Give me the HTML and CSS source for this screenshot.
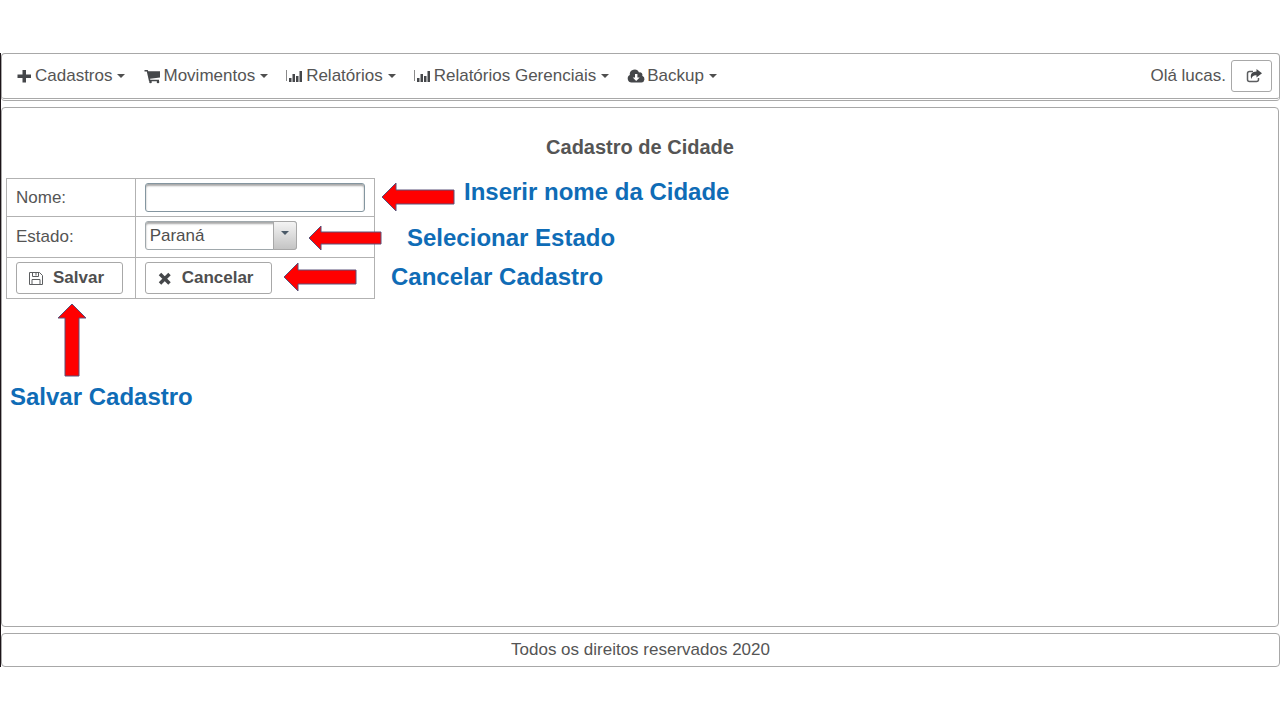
FILE: index.html
```html
<!DOCTYPE html>
<html lang="pt-BR">
<head>
<meta charset="utf-8">
<meta name="viewport" content="width=device-width, initial-scale=1">
<title>Cadastro de Cidade</title>
<link rel="stylesheet" href="styles.css">
</head>
<body>
<div class="app">
  <header class="topbar">
    <nav class="menu">
      <button class="menu-item" type="button">
        <svg class="icon" viewBox="0 0 18 18"><path d="M7.500 3h3.500v4.500h5V11h-5v4.500H7.500V11h-5V7.500h5z"/></svg>
        <span>Cadastros</span><span class="caret"></span>
      </button>
      <button class="menu-item" type="button">
        <svg class="icon" viewBox="0 0 18 18"><path d="M1.500 3h3.200l.6 1.200H17v6.300L7 11.800l.3 1H16v1.400H6L3.800 4.500H1.500z"/><circle cx="7.500" cy="15" r="1.300"/><circle cx="15" cy="15" r="1.300"/></svg>
        <span>Movimentos</span><span class="caret"></span>
      </button>
      <button class="menu-item" type="button">
        <svg class="icon" viewBox="0 0 18 18"><path class="axis" d="M0 3h1v11H0z"/><path d="M3 11h2.500v4H3zM6.500 7H9v8H6.500zM10 9h2.500v6H10zM13.500 4H16v11h-2.500z"/></svg>
        <span>Relatórios</span><span class="caret"></span>
      </button>
      <button class="menu-item" type="button">
        <svg class="icon" viewBox="0 0 18 18"><path class="axis" d="M0 3h1v11H0z"/><path d="M3 11h2.500v4H3zM6.500 7H9v8H6.500zM10 9h2.500v6H10zM13.500 4H16v11h-2.500z"/></svg>
        <span>Relatórios Gerenciais</span><span class="caret"></span>
      </button>
      <button class="menu-item" type="button">
        <svg class="icon" viewBox="0 0 18 18"><path fill-rule="evenodd" d="M4.500 15.500A4 4 0 0 1 2.800 8 4.800 4.800 0 0 1 12 5.500a2.600 2.600 0 0 1 3.300 3.300 3.500 3.500 0 0 1-.8 6.700zM8 7v3.500H5.700L9.200 14l3.500-3.500h-2.300V7z"/></svg>
        <span>Backup</span><span class="caret"></span>
      </button>
    </nav>
    <div class="user">
      <span>Olá lucas.</span>
      <button class="button button-exit" type="button" aria-label="Sair">
        <svg class="icon" viewBox="0 0 18 18"><path class="line" d="M8 4.500H4.500a2 2 0 0 0-2 2v6a2 2 0 0 0 2 2h7a2 2 0 0 0 2-2V11"/><path d="M11.500 2l5.500 4.300-5.500 4.200V8.200C8.500 8 7 9 6.500 12 4.500 7.500 7 4.500 11.500 4.500z"/></svg>
      </button>
    </div>
  </header>

  <main class="content">
    <h1 class="title">Cadastro de Cidade</h1>
    <form>
      <table class="form-table">
        <tr>
          <td class="label-cell"><label for="nome">Nome:</label></td>
          <td><input class="field" id="nome" type="text"></td>
        </tr>
        <tr>
          <td class="label-cell"><label for="estado">Estado:</label></td>
          <td>
            <div class="dropdown">
              <select class="select" id="estado"><option>Paraná</option></select>
              <span class="trigger"><span class="caret"></span></span>
            </div>
          </td>
        </tr>
        <tr>
          <td><button class="button" type="button">
            <svg class="icon" viewBox="0 0 18 18"><path class="line thin" d="M2.500 3.500h10l3 3v9h-13zM5 15.500v-5h8v5M5.500 3.500v4h6v-4M9 4v2.500"/></svg>
            <span>Salvar</span></button></td>
          <td><button class="button" type="button">
            <svg class="icon" viewBox="0 0 18 18"><path class="cross" d="M4 5l9.500 9.500M13.500 5L4 14.500"/></svg>
            <span>Cancelar</span></button></td>
        </tr>
      </table>
    </form>
  </main>

  <footer class="footer">Todos os direitos reservados 2020</footer>

  <div class="note note-name">
    <svg class="arrow" viewBox="0 0 74 30"><path d="M1 15L15 1v7h58v14H15v7z"/></svg>
    <span>Inserir nome da Cidade</span>
  </div>
  <div class="note note-state">
    <svg class="arrow arrow-slim" viewBox="0 0 74 26"><path d="M1 13L13 1v6h60v12H13v6z"/></svg>
    <span>Selecionar Estado</span>
  </div>
  <div class="note note-cancel">
    <svg class="arrow" viewBox="0 0 74 30"><path d="M1 15L15 1v7h58v14H15v7z"/></svg>
    <span>Cancelar Cadastro</span>
  </div>
  <div class="note note-save">
    <svg class="arrow arrow-up" viewBox="0 0 30 74"><path d="M15 1l14 14h-7v58H8V15H1z"/></svg>
    <span>Salvar Cadastro</span>
  </div>
</div>
</body>
</html>
```
FILE: styles.css
```css
* {
  box-sizing: border-box;
}

body {
  margin: 0;
  padding: 53px 0;
  min-height: 100vh;
  display: flex;
  background: #fff;
  color: #555;
  font: 17px/20px "Liberation Sans", Arial, sans-serif;
}

.app {
  position: relative;
  flex: 1;
  display: flex;
  flex-direction: column;
  gap: 6px;
  border-left: 1px solid #1c1418;
}

.topbar {
  display: flex;
  align-items: center;
  justify-content: space-between;
  min-height: 48px;
  padding: 0 7px 0 13px;
  border: 1px solid #a8a8a8;
  border-bottom: 3px double #a8a8a8;
  border-radius: 4px;
}

.menu {
  display: flex;
  flex-wrap: wrap;
  gap: 18px;
}

.menu-item {
  display: flex;
  align-items: center;
  padding: 0;
  border: 0;
  background: none;
  color: inherit;
  font: inherit;
}

.icon {
  flex: none;
  width: 18px;
  height: 18px;
  margin-right: 2px;
  fill: #45474a;
}

.axis {
  fill: #8a8a8a;
}

.line {
  fill: none;
  stroke: #5c5e60;
  stroke-width: 1.5;
}

.thin {
  stroke-width: 1;
}

.cross {
  fill: none;
  stroke: #45474a;
  stroke-width: 3.5;
}

.caret {
  margin-left: 5px;
  border: 4px solid transparent;
  border-top-color: #4f4f4f;
  border-bottom: 0;
}

.user {
  display: flex;
  align-items: center;
  gap: 5px;
}

.button {
  display: flex;
  align-items: center;
  gap: 6px;
  height: 32px;
  padding: 0 18px 0 10px;
  border: 1px solid #a8a8a8;
  border-radius: 3px;
  background: #fff;
  color: #4f4f4f;
  font: bold 17px/20px "Liberation Sans", Arial, sans-serif;
}

.button-exit {
  padding: 0 6px 0 13px;
}

.content {
  flex: 1;
  margin-right: 1px;
  padding: 29px 4px 8px;
  border: 1px solid #a8a8a8;
  border-radius: 4px;
}

.title {
  margin: 0 0 21px;
  font-size: 20px;
  line-height: 20px;
  text-align: center;
}

.form-table {
  border-collapse: collapse;
}

.form-table td {
  padding: 4px 9px;
  border: 1px solid #b2b2b2;
}

.form-table .label-cell {
  padding-right: 61px;
}

.field,
.select {
  display: block;
  height: 29px;
  padding: 0 4px;
  border: 1px solid #a0a8ac;
  border-radius: 3px;
  background: #fff;
  box-shadow: inset 0 2px 2px #a8a8a8;
  color: #4f4f4f;
  font: inherit;
}

.field {
  width: 220px;
  border-color: #8496a0;
}

.dropdown {
  position: relative;
  width: 152px;
  padding-bottom: 3px;
}

.select {
  width: 100%;
  appearance: none;
}

.trigger {
  position: absolute;
  top: 0;
  right: 0;
  display: flex;
  justify-content: center;
  width: 24px;
  height: 29px;
  padding-top: 9px;
  border: 1px solid #a8a8a8;
  border-radius: 0 3px 3px 0;
  background: linear-gradient(#f4f4f4, #c4c4c4);
  pointer-events: none;
}

.trigger .caret {
  height: 4px;
  margin: 0;
  border-top-color: #4b5a68;
}

.footer {
  padding: 6px;
  border: 1px solid #a8a8a8;
  border-radius: 4px;
  text-align: center;
}

/* Callouts lie over the form and point at its controls */
.note {
  position: absolute;
  display: flex;
  align-items: center;
  color: #0f6cb6;
  font-size: 24px;
  font-weight: bold;
  line-height: 28px;
  white-space: nowrap;
}

.arrow {
  flex: none;
  width: 74px;
  height: 30px;
  fill: #f00;
  stroke: #5a5078;
}

.arrow-slim {
  height: 26px;
}

.arrow-up {
  width: 30px;
  height: 74px;
  margin-left: 47px;
}

.note-name {
  top: 129px;
  left: 380px;
  align-items: flex-start;
  gap: 9px;
}

.note-name span {
  margin-top: -4px;
}

.note-state {
  top: 171px;
  left: 307px;
  gap: 25px;
}

.note-cancel {
  top: 209px;
  left: 282px;
  gap: 34px;
}

.note-save {
  top: 250px;
  left: 9px;
  flex-direction: column;
  align-items: flex-start;
  gap: 6px;
}
```
